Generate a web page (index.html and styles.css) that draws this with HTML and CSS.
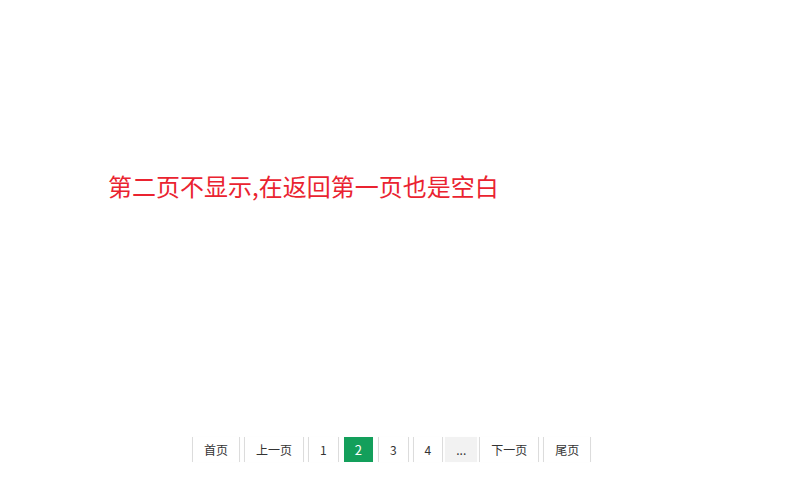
FILE: index.html
```html
<!DOCTYPE html>
<html lang="zh-CN">
<head>
<meta charset="utf-8">
<title>分页</title>
<link rel="stylesheet" href="styles.css">
</head>
<body>
<div class="page">
  <h1 class="notice">第二页不显示,在返回第一页也是空白</h1>
  <div class="pager">
    <a class="item">首页</a>
    <a class="item">上一页</a>
    <a class="item">1</a>
    <span class="item current">2</span>
    <a class="item">3</a>
    <a class="item">4</a>
    <span class="item more">...</span>
    <a class="item">下一页</a>
    <a class="item">尾页</a>
  </div>
</div>
</body>
</html>
```
FILE: styles.css
```css
html, body {
  margin: 0;
  padding: 0;
  background: #fff;
}
.page {
  width: 789px;
  height: 504px;
  display: flex;
  flex-direction: column;
  font-family: "Noto Sans CJK SC", "Noto Sans", sans-serif;
}
.notice {
  margin: 169px 0 0 108px;
  font-size: 24px;
  font-weight: normal;
  line-height: 34px;
  color: #ea2330;
}
.pager {
  margin-top: 234px;
  margin-left: 192px;
  display: flex;
  gap: 4px;
}
.item {
  height: 25px;
  line-height: 25px;
  padding: 0 11px;
  font-size: 12px;
  color: #333;
  border-left: 1px solid #dcdcdc;
  border-right: 1px solid #dcdcdc;
  box-shadow: 0 0 1px rgba(0, 0, 0, 0.04);
  background: #fff;
}
.current {
  background: #139f5b;
  border-color: #139f5b;
  color: #fff;
  font-size: 13px;
  padding: 0 10px;
  margin: 0 1px;
}
.more {
  background: #f2f2f2;
  border-color: #f2f2f2;
  margin: 0 -2px 0 -2px;
  padding: 0 10px;
}
```
